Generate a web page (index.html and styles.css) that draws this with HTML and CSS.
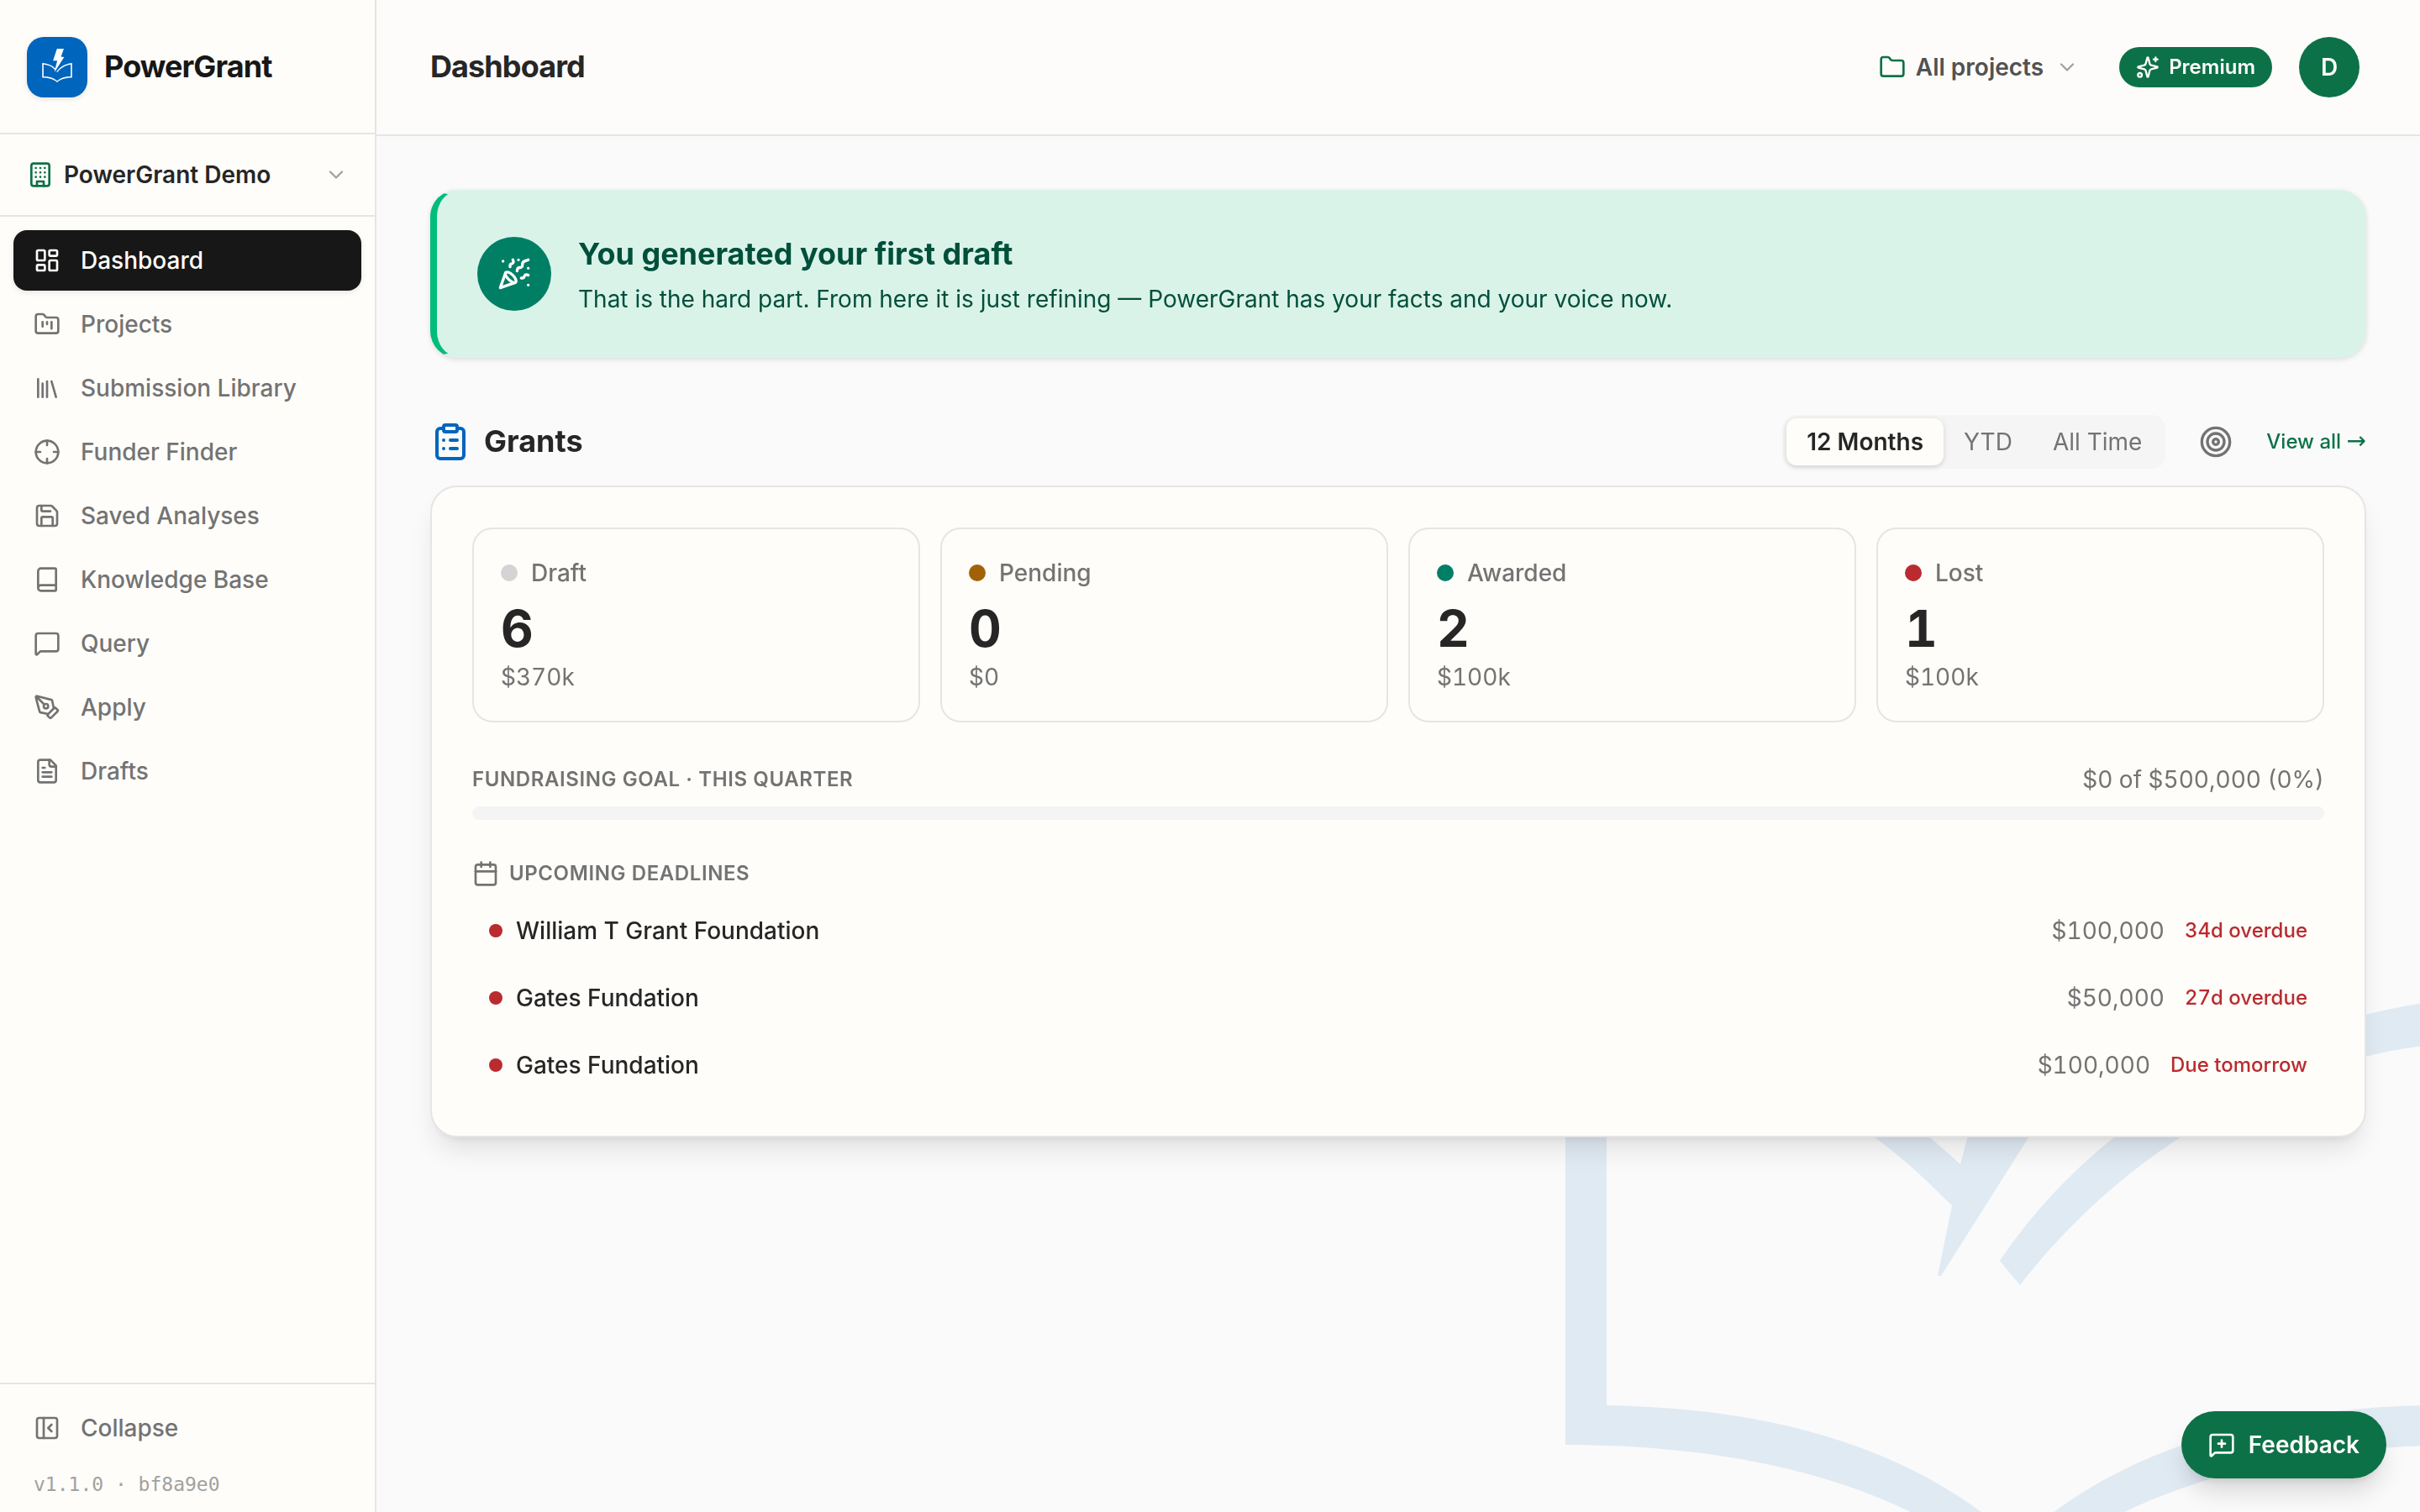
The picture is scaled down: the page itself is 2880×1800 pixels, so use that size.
FILE: index.html
```html
<!DOCTYPE html>
<html lang="en">
<head>
    <meta charset="UTF-8">
    <meta name="viewport" content="width=device-width, initial-scale=1.0">
    <title>Dashboard - PowerGrant</title>
    <link rel="stylesheet" href="styles.css">
</head>
<body>
    <!-- Book and bolt mark, shared by the logo and the watermark -->
    <svg class="defs" width="0" height="0">
        <symbol id="mark" viewBox="0 0 1076 1210">
            <path d="M0 514C200 530 340 590 470 710L543 432H390L533 0H780L676 290L790 300L447 843H443L460 759C385 685 295 597 49 568V997C250 1000 420 1050 538 1160C656 1050 826 1000 1027 997V568C810 595 640 725 541 854L517 825C600 700 780 540 1076 511V1044C866 1044 666 1090 538 1210C410 1090 210 1044 0 1044Z"/>
        </symbol>
    </svg>

    <svg class="watermark"><use href="#mark"/></svg>

    <aside class="sidebar">
        <div class="brand">
            <div class="logo"><svg><use href="#mark"/></svg></div>
            <span>PowerGrant</span>
        </div>
        <div class="org">
            <svg class="icon org-icon" viewBox="0 0 24 24"><rect width="16" height="20" x="4" y="2" rx="2"/><path d="M9 22v-4h6v4M8 6h.01M16 6h.01M12 6h.01M12 10h.01M12 14h.01M16 10h.01M16 14h.01M8 10h.01M8 14h.01"/></svg>
            <span>PowerGrant Demo</span>
            <svg class="icon chevron" viewBox="0 0 24 24"><path d="m6 9 6 6 6-6"/></svg>
        </div>
        <nav>
            <a href="#" class="active">
                <svg class="icon" viewBox="0 0 24 24"><rect width="7" height="9" x="3" y="3" rx="1"/><rect width="7" height="5" x="14" y="3" rx="1"/><rect width="7" height="9" x="14" y="12" rx="1"/><rect width="7" height="5" x="3" y="16" rx="1"/></svg>
                Dashboard
            </a>
            <a href="#">
                <svg class="icon" viewBox="0 0 24 24"><path d="M4 20h16a2 2 0 0 0 2-2V8a2 2 0 0 0-2-2h-7.93a2 2 0 0 1-1.66-.9l-.82-1.2A2 2 0 0 0 7.93 3H4a2 2 0 0 0-2 2v13c0 1.1.9 2 2 2ZM8 10v4M12 10v2M16 10v6"/></svg>
                Projects
            </a>
            <a href="#">
                <svg class="icon" viewBox="0 0 24 24"><path d="m16 6 4 14M12 6v14M8 8v12M4 4v16"/></svg>
                Submission Library
            </a>
            <a href="#">
                <svg class="icon" viewBox="0 0 24 24"><circle cx="12" cy="12" r="10"/><path d="M22 12h-4M6 12H2M12 6V2M12 22v-4"/></svg>
                Funder Finder
            </a>
            <a href="#">
                <svg class="icon" viewBox="0 0 24 24"><path d="M15.2 3a2 2 0 0 1 1.4.6l3.8 3.8a2 2 0 0 1 .6 1.4V19a2 2 0 0 1-2 2H5a2 2 0 0 1-2-2V5a2 2 0 0 1 2-2z"/><path d="M17 21v-7a1 1 0 0 0-1-1H8a1 1 0 0 0-1 1v7M7 3v4a1 1 0 0 0 1 1h7"/></svg>
                Saved Analyses
            </a>
            <a href="#">
                <svg class="icon" viewBox="0 0 24 24"><path d="M4 19.5v-15A2.5 2.5 0 0 1 6.5 2H19a1 1 0 0 1 1 1v18a1 1 0 0 1-1 1H6.5a1 1 0 0 1 0-5H20"/></svg>
                Knowledge Base
            </a>
            <a href="#">
                <svg class="icon" viewBox="0 0 24 24"><path d="M22 17a2 2 0 0 1-2 2H6.828a2 2 0 0 0-1.414.586l-2.202 2.202A.71.71 0 0 1 2 21.286V5a2 2 0 0 1 2-2h16a2 2 0 0 1 2 2z"/></svg>
                Query
            </a>
            <a href="#">
                <svg class="icon" viewBox="0 0 24 24"><path d="M15.707 21.293a1 1 0 0 1-1.414 0l-1.586-1.586a1 1 0 0 1 0-1.414l5.586-5.586a1 1 0 0 1 1.414 0l1.586 1.586a1 1 0 0 1 0 1.414z"/><path d="m18 13-1.375-6.874a1 1 0 0 0-.746-.776L3.235 2.028a1 1 0 0 0-1.207 1.207L5.35 15.879a1 1 0 0 0 .776.746L13 18M2.3 2.3l7.286 7.286"/><circle cx="11" cy="11" r="2"/></svg>
                Apply
            </a>
            <a href="#">
                <svg class="icon" viewBox="0 0 24 24"><path d="M15 2H6a2 2 0 0 0-2 2v16a2 2 0 0 0 2 2h12a2 2 0 0 0 2-2V7Z"/><path d="M14 2v4a2 2 0 0 0 2 2h4M10 9H8M16 13H8M16 17H8"/></svg>
                Drafts
            </a>
        </nav>
        <div class="sidebar-footer">
            <a href="#">
                <svg class="icon" viewBox="0 0 24 24"><rect width="18" height="18" x="3" y="3" rx="2"/><path d="M9 3v18M16 15l-3-3 3-3"/></svg>
                Collapse
            </a>
            <p>v1.1.0 · bf8a9e0</p>
        </div>
    </aside>

    <div class="page">
        <header>
            <h1>Dashboard</h1>
            <div class="project-select">
                <svg class="icon" viewBox="0 0 24 24"><path d="M20 20a2 2 0 0 0 2-2V8a2 2 0 0 0-2-2h-7.9a2 2 0 0 1-1.69-.9L9.6 3.9A2 2 0 0 0 7.93 3H4a2 2 0 0 0-2 2v13a2 2 0 0 0 2 2Z"/></svg>
                <span>All projects</span>
                <svg class="icon chevron" viewBox="0 0 24 24"><path d="m6 9 6 6 6-6"/></svg>
            </div>
            <div class="premium">
                <svg class="icon" viewBox="0 0 24 24"><path d="M9.937 15.5A2 2 0 0 0 8.5 14.063l-6.135-1.582a.5.5 0 0 1 0-.962L8.5 9.936A2 2 0 0 0 9.937 8.5l1.582-6.135a.5.5 0 0 1 .963 0L14.063 8.5A2 2 0 0 0 15.5 9.937l6.135 1.581a.5.5 0 0 1 0 .964L15.5 14.063a2 2 0 0 0-1.437 1.437l-1.582 6.135a.5.5 0 0 1-.963 0z"/><path d="M20 2v4M22 4h-4"/><circle cx="4" cy="20" r="2"/></svg>
                Premium
            </div>
            <div class="avatar">D</div>
        </header>

        <main>
            <section class="banner">
                <div class="banner-icon">
                    <svg class="icon" viewBox="0 0 24 24"><path d="M5.8 11.3 2 22l10.7-3.79M4 3h.01M22 8h.01M15 2h.01M22 20h.01"/><path d="m22 2-2.24.75a2.9 2.9 0 0 0-1.96 3.12c.1.86-.57 1.63-1.45 1.63h-.38c-.86 0-1.6.6-1.76 1.44L14 10"/><path d="m22 13-.82-.33c-.86-.34-1.82.2-1.98 1.11c-.11.7-.72 1.22-1.43 1.22H17"/><path d="m11 2 .33.82c.34.86-.2 1.82-1.11 1.98C9.52 4.9 9 5.52 9 6.23V7"/><path d="M11 13c1.93 1.93 2.83 4.17 2 5-.83.83-3.07-.07-5-2-1.93-1.93-2.83-4.17-2-5 .83-.83 3.07.07 5 2Z"/></svg>
                </div>
                <div>
                    <h2>You generated your first draft</h2>
                    <p>That is the hard part. From here it is just refining — PowerGrant has your facts and your voice now.</p>
                </div>
            </section>

            <div class="section-head">
                <svg class="icon" viewBox="0 0 24 24"><rect width="8" height="4" x="8" y="2" rx="1"/><path d="M16 4h2a2 2 0 0 1 2 2v14a2 2 0 0 1-2 2H6a2 2 0 0 1-2-2V6a2 2 0 0 1 2-2h2M12 11h4M12 16h4M8 11h.01M8 16h.01"/></svg>
                <h2>Grants</h2>
                <div class="tabs">
                    <button class="selected">12 Months</button>
                    <button>YTD</button>
                    <button>All Time</button>
                </div>
                <svg class="icon target" viewBox="0 0 24 24"><circle cx="12" cy="12" r="10"/><circle cx="12" cy="12" r="6"/><circle cx="12" cy="12" r="2"/></svg>
                <a href="#" class="view-all">View all <span>→</span></a>
            </div>

            <section class="card">
                <div class="stats">
                    <div class="stat">
                        <div class="stat-label"><i class="dot draft"></i>Draft</div>
                        <strong>6</strong>
                        <span>$370k</span>
                    </div>
                    <div class="stat">
                        <div class="stat-label"><i class="dot pending"></i>Pending</div>
                        <strong>0</strong>
                        <span>$0</span>
                    </div>
                    <div class="stat">
                        <div class="stat-label"><i class="dot awarded"></i>Awarded</div>
                        <strong>2</strong>
                        <span>$100k</span>
                    </div>
                    <div class="stat">
                        <div class="stat-label"><i class="dot lost"></i>Lost</div>
                        <strong>1</strong>
                        <span>$100k</span>
                    </div>
                </div>

                <div class="goal">
                    <h3>Fundraising goal · This quarter</h3>
                    <span>$0 of $500,000 (0%)</span>
                </div>
                <div class="progress"></div>

                <div class="deadlines-head">
                    <svg class="icon" viewBox="0 0 24 24"><path d="M8 2v4M16 2v4"/><rect width="18" height="18" x="3" y="4" rx="2"/><path d="M3 10h18"/></svg>
                    <h3>Upcoming deadlines</h3>
                </div>
                <ul class="deadlines">
                    <li><i class="dot lost"></i><b>William T Grant Foundation</b><span>$100,000</span><em>34d overdue</em></li>
                    <li><i class="dot lost"></i><b>Gates Fundation</b><span>$50,000</span><em>27d overdue</em></li>
                    <li><i class="dot lost"></i><b>Gates Fundation</b><span>$100,000</span><em>Due tomorrow</em></li>
                </ul>
            </section>
        </main>
    </div>

    <button class="feedback">
        <svg class="icon" viewBox="0 0 24 24"><path d="M22 17a2 2 0 0 1-2 2H6.828a2 2 0 0 0-1.414.586l-2.202 2.202A.71.71 0 0 1 2 21.286V5a2 2 0 0 1 2-2h16a2 2 0 0 1 2 2zM12 8v6M9 11h6"/></svg>
        Feedback
    </button>
</body>
</html>
```
FILE: styles.css
```css
* {
    box-sizing: border-box;
    margin: 0;
    padding: 0;
}
body {
    display: flex;
    height: 100vh;
    overflow: hidden;
    font-family: Inter, "Liberation Sans", sans-serif;
    font-size: 28px;
    line-height: 40px;
    color: #262626;
    background-color: #fafafa;
}
a {
    color: inherit;
    text-decoration: none;
}
button {
    font: inherit;
    color: inherit;
    background: none;
    border: none;
    cursor: pointer;
}
.defs {
    position: absolute;
}
.icon {
    width: 32px;
    height: 32px;
    flex-shrink: 0;
    fill: none;
    stroke: currentColor;
    stroke-width: 2;
    stroke-linecap: round;
    stroke-linejoin: round;
}
.icon.chevron {
    width: 28px;
    height: 28px;
    color: #a1a1a1;
}
.dot {
    width: 20px;
    height: 20px;
    flex-shrink: 0;
    border-radius: 50%;
}
.draft { background-color: #d4d4d4; }
.pending { background-color: #a16207; }
.awarded { background-color: #007f65; }
.lost { background-color: #b92b2f; }

/* Faded mark behind the cards, runs off the right and bottom edges */
.watermark {
    position: fixed;
    left: 1863px;
    top: 676px;
    width: 1076px;
    height: 1210px;
    fill: #e0eaf3;
}

/* Sidebar */
.sidebar {
    position: relative;
    display: flex;
    flex-direction: column;
    width: 448px;
    flex-shrink: 0;
    background-color: #fefdf9;
    border-right: 2px solid #e5e5e5;
}
.brand {
    display: flex;
    align-items: center;
    gap: 20px;
    height: 160px;
    padding: 2px 32px 0;
    border-bottom: 2px solid #e5e5e5;
    font-size: 36px;
    font-weight: 700;
    letter-spacing: -0.9px;
    color: #171717;
}
.brand span {
    padding-bottom: 2px;
}
.logo {
    display: flex;
    align-items: center;
    justify-content: center;
    width: 72px;
    height: 72px;
    padding-bottom: 4px;
    border-radius: 20px;
    background-color: #0065bd;
    box-shadow: 0 2px 6px rgba(0, 0, 0, 0.1);
}
.logo svg {
    width: 36px;
    height: 40px;
    fill: #fff;
}
.org {
    display: flex;
    align-items: center;
    gap: 12px;
    height: 98px;
    padding: 0 32px;
    border-bottom: 2px solid #e5e5e5;
    font-weight: 600;
}
.org span {
    flex: 1;
}
.org-icon {
    color: #0d7148;
}
nav {
    display: flex;
    flex-direction: column;
    gap: 4px;
    flex: 1;
    padding: 16px;
}
nav a, .sidebar-footer a {
    display: flex;
    align-items: center;
    gap: 24px;
    height: 72px;
    padding: 0 24px;
    border-radius: 16px;
    font-weight: 500;
    color: #737373;
}
nav a.active {
    background-color: #171717;
    color: #fefdf9;
    box-shadow: 0 2px 6px rgba(0, 0, 0, 0.1);
}
.sidebar-footer {
    height: 154px;
    padding: 16px;
    border-top: 2px solid #e5e5e5;
}
.sidebar-footer p {
    padding: 15px 24px 0;
    font-family: "DejaVu Sans Mono", "Liberation Mono", monospace;
    font-size: 23px;
    line-height: 32px;
    color: #a1a1a1;
}

/* Top bar */
.page {
    position: relative;
    flex: 1;
}
header {
    display: flex;
    align-items: center;
    height: 162px;
    padding: 0 72px 0 64px;
    background-color: #fdfcfa;
    border-bottom: 2px solid #e5e5e5;
}
h1 {
    flex: 1;
    padding-bottom: 2px;
    font-size: 36px;
    font-weight: 700;
    letter-spacing: -0.9px;
}
.project-select {
    display: flex;
    align-items: center;
    gap: 12px;
    margin-right: 48px;
    font-weight: 600;
    color: #525252;
}
.project-select .icon:first-child {
    color: #0d7148;
}
.project-select .chevron {
    margin-left: 2px;
}
.premium {
    display: flex;
    align-items: center;
    gap: 11px;
    height: 48px;
    margin-right: 32px;
    padding: 0 20px;
    border-radius: 24px;
    font-size: 24px;
    font-weight: 600;
    color: #fefdf9;
    background-color: #0d7148;
}
.premium .icon {
    width: 28px;
    height: 28px;
}
.avatar {
    width: 72px;
    height: 72px;
    border-radius: 50%;
    font-weight: 600;
    line-height: 72px;
    text-align: center;
    color: #fefdf9;
    background-color: #0d7148;
}

/* Content */
main {
    padding: 64px;
}
.banner {
    display: flex;
    align-items: center;
    gap: 32px;
    height: 200px;
    padding: 0 48px;
    border: 2px solid #daf3e9;
    border-left: 8px solid #00bc7d;
    border-radius: 32px;
    background-color: #daf3e9;
    box-shadow: 0 2px 6px rgba(0, 0, 0, 0.12);
    color: #004f3b;
}
.banner-icon {
    display: flex;
    align-items: center;
    justify-content: center;
    width: 88px;
    height: 88px;
    border-radius: 50%;
    color: #fff;
    background-color: #007f65;
}
.banner-icon .icon {
    width: 40px;
    height: 40px;
}
.banner h2, .section-head h2 {
    font-size: 36px;
    font-weight: 700;
    line-height: 56px;
}
.banner h2 {
    margin-bottom: 8px;
    line-height: 52px;
}
.section-head {
    display: flex;
    align-items: center;
    height: 64px;
    margin: 68px 0 20px;
}
.section-head .icon {
    width: 48px;
    height: 48px;
    color: #0065bd;
}
.section-head h2 {
    flex: 1;
    margin-left: 16px;
    padding-bottom: 2px;
}
.tabs {
    display: flex;
    height: 64px;
    padding: 4px;
    border-radius: 16px;
    background-color: #f5f5f5;
    color: #737373;
}
.tabs button {
    padding: 0 24px;
    border-radius: 12px;
}
.tabs .selected {
    font-weight: 600;
    color: #262626;
    background-color: #fefdf9;
    box-shadow: 0 2px 6px rgba(0, 0, 0, 0.15);
}
.section-head .target {
    width: 40px;
    height: 40px;
    margin: 0 40px;
    color: #737373;
}
.view-all {
    font-size: 24px;
    font-weight: 500;
    color: #0d7148;
}
.view-all span {
    font-family: "DejaVu Sans", sans-serif;
    font-size: 28px;
    line-height: 1;
}
.card {
    height: 776px;
    padding: 48px;
    border: 2px solid #e5e5e5;
    border-radius: 32px;
    background-color: #fefdf9;
    box-shadow: 0 20px 30px -6px rgba(0, 0, 0, 0.1), 0 8px 12px -8px rgba(0, 0, 0, 0.1);
}
.stats {
    display: grid;
    grid-template-columns: repeat(4, 1fr);
    gap: 24px;
}
.stat {
    display: flex;
    flex-direction: column;
    height: 232px;
    padding: 32px;
    border: 2px solid #e5e5e5;
    border-radius: 24px;
    color: #737373;
}
.stat-label {
    display: flex;
    align-items: center;
    gap: 16px;
    font-weight: 500;
}
.stat strong {
    margin-top: 8px;
    font-size: 60px;
    font-weight: 700;
    line-height: 76px;
    color: #262626;
    font-variant-numeric: tabular-nums;
}
.stat span, .goal span, .deadlines span {
    font-variant-numeric: tabular-nums;
    color: #737373;
}
h3 {
    font-size: 24px;
    font-weight: 600;
    letter-spacing: 0.6px;
    text-transform: uppercase;
    color: #737373;
}
.goal {
    display: flex;
    justify-content: space-between;
    margin: 48px 0 12px;
}
.progress {
    height: 16px;
    border-radius: 8px;
    background-color: #f4f4f5;
}
.deadlines-head {
    display: flex;
    align-items: center;
    gap: 12px;
    height: 32px;
    margin: 48px 0 16px;
    color: #737373;
}
.deadlines {
    display: flex;
    flex-direction: column;
    gap: 8px;
    list-style: none;
}
.deadlines li {
    display: flex;
    align-items: center;
    height: 72px;
    padding: 0 20px;
}
.deadlines .dot {
    width: 16px;
    height: 16px;
}
.deadlines b {
    flex: 1;
    margin-left: 16px;
    font-weight: 500;
}
.deadlines em {
    margin-left: 24px;
    font-size: 24px;
    font-style: normal;
    font-weight: 500;
    font-variant-numeric: tabular-nums;
    color: #b92b2f;
}

.feedback {
    position: fixed;
    right: 40px;
    bottom: 40px;
    display: flex;
    align-items: center;
    gap: 16px;
    height: 80px;
    padding: 0 32px;
    border-radius: 40px;
    font-weight: 600;
    color: #fefdf9;
    background-color: #0d7148;
    box-shadow: 0 20px 30px -6px rgba(0, 0, 0, 0.15), 0 8px 12px -8px rgba(0, 0, 0, 0.15);
}
```
